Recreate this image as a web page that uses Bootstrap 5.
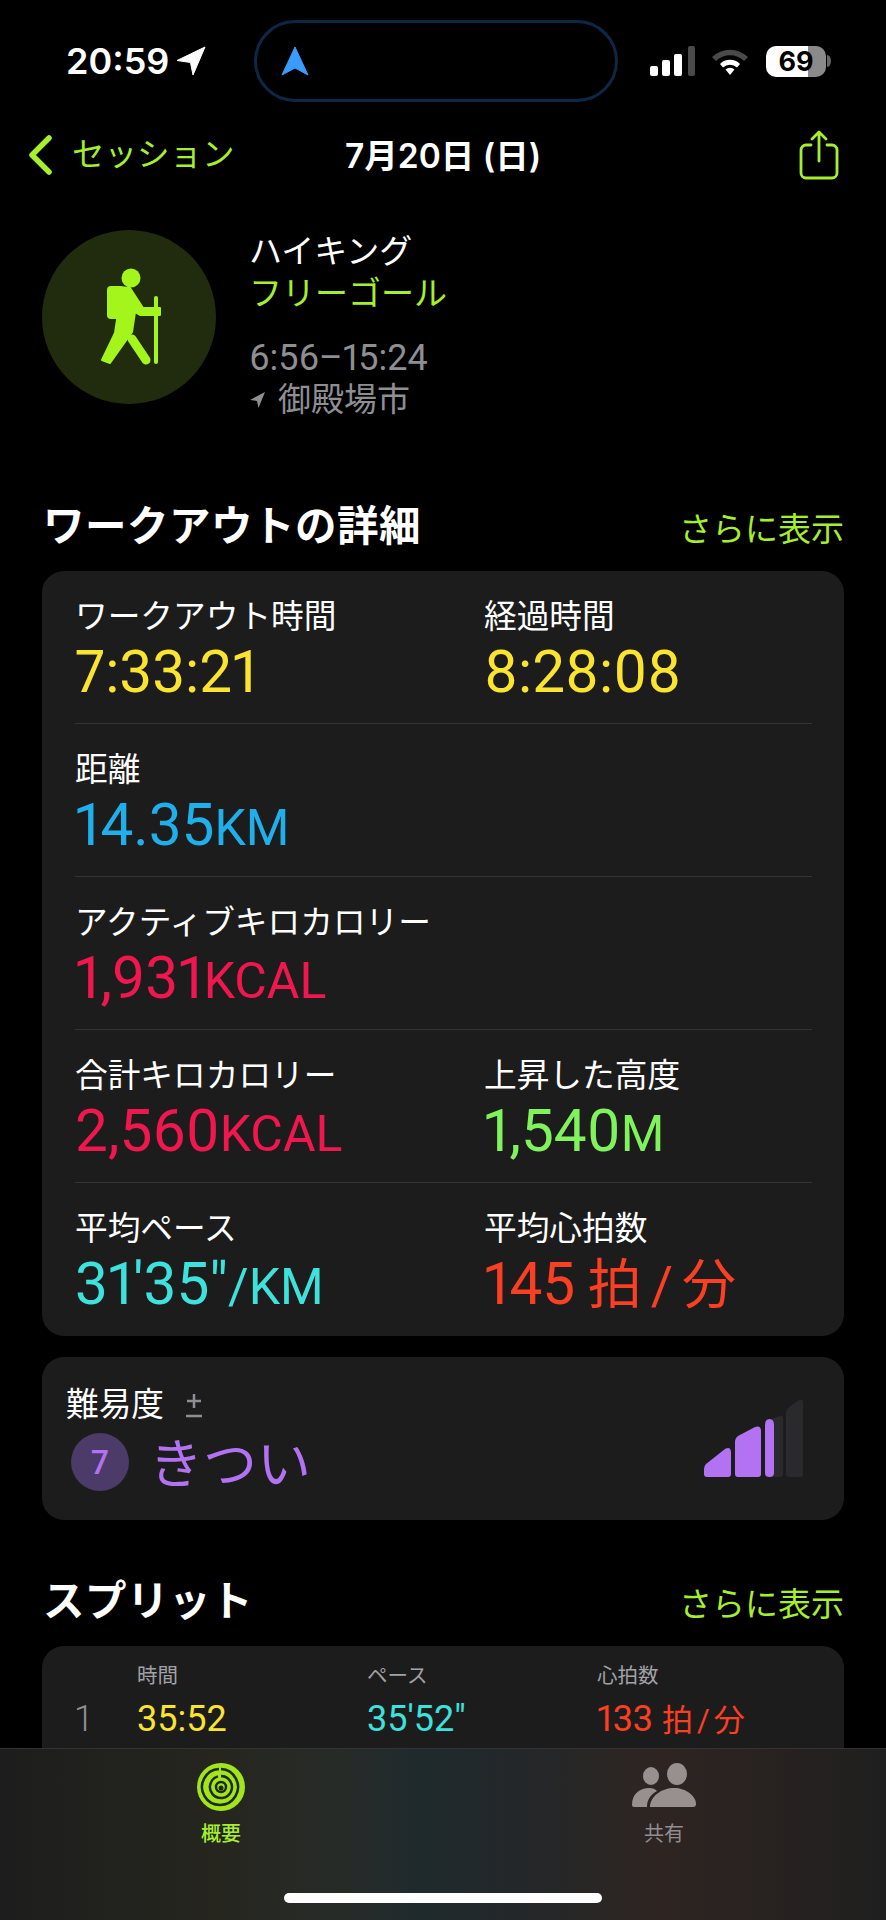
<!DOCTYPE html>
<html lang="ja"><head><meta charset="utf-8"><title>ワークアウト</title>
<link href="https://cdn.jsdelivr.net/npm/bootstrap@5.3.0/dist/css/bootstrap.min.css" rel="stylesheet">
<style>
html,body{background:#000;margin:0}
body{font-family:Roboto,"Noto Sans CJK JP",sans-serif;color:#fff;width:886px;font-variant-numeric:proportional-nums}
.screen{width:886px;height:1920px;overflow:hidden;background:#000;position:relative}
.sbar{height:122px;padding:20px 56px 20px 66px}
.sbar>*{flex:none}
.clock{font-family:Inter,sans-serif;font-weight:600;font-size:36px;line-height:44px;width:110px}
.pill{width:364px;height:82px;border:3px solid #0d2746;border-radius:41px;margin-left:48px;padding-left:24px}
.sicons{margin-left:32px;gap:14px}
.batt{width:60px;height:31px;border-radius:10px;background:linear-gradient(90deg,#fff 0,#fff 70%,#8a8a8a 70%);color:#000;font:700 27px/31px Inter,sans-serif;text-align:center}
.navline{height:66px;padding:0 47px 0 28px;position:relative}
.backtxt{font-size:32.5px;line-height:40px;color:#a6ef2e;font-weight:400;margin-left:20px}
.navtitle{font-family:Inter,"Noto Sans CJK JP",sans-serif;font-weight:600;font-size:33.5px;line-height:40px;position:absolute;left:345px;top:14px;white-space:nowrap}
.hero{margin-top:20px;padding-left:42px;height:282px}
.disc{width:174px;height:174px;border-radius:50%;background:#212c0f;margin-top:22px}
.htext{margin-left:33px;font-size:33px;line-height:42px;font-weight:400}
.lime{color:#a6ef2e}.grey{color:#8e8e93}
.sect{padding:0 42px 0 43px;height:46px}
.sect h2{font-size:41.5px;font-weight:700;line-height:46px;margin:0;color:#fff;letter-spacing:.5px}
.more{font-size:33px;line-height:46px;color:#a6ef2e;font-weight:400;padding-top:3px}
.panel{background:#1c1c1d;border-radius:22px;margin:0 42px}
.srow{margin:0 32px 0 33px;padding:26px 0 22px;border-bottom:1px solid #343436;height:153px}
.srow:last-child{border-bottom:0}
.c1{width:409px}
.lab{font-size:32.7px;line-height:40px;font-weight:400;white-space:nowrap}
.val{font-size:58.5px;line-height:60px;margin-top:5px;white-space:nowrap;font-weight:400}
.val small{font-size:50px;font-weight:400}
.val .cj{font-size:54px;font-weight:400;word-spacing:-.08em;margin-left:-2px}
.yl{color:#fbe430}.bl{color:#1fb0ec}.pk{color:#f0174f}.gr{color:#80f35c}.cy{color:#3de2dc}.rd{color:#fa3f22}.pu{color:#b272f2}
.diff{height:163px;margin-top:21px;padding:28px 40px 0 24px;position:relative}
.numc{width:58px;height:58px;border-radius:50%;background:#4c3a68;font-size:34px;line-height:58px;text-align:center;margin-left:5px;color:#b272f2;font-weight:500}
.kitsui{font-size:54px;line-height:58px;margin-left:20px;padding-top:8px;font-weight:400}
.split{height:300px;margin-top:21px;padding:16px 33px}
.sp-h,.sp-v{display:flex}
.sp-n{width:62px;flex:none}.sp-c{width:230px;flex:none;white-space:nowrap}
.sp-h{font-size:20.5px;line-height:28px;color:#a1a1a6;font-weight:400}
.sp-v{font-size:36px;line-height:40px;margin-top:9px;font-weight:400}
.sp-v .one{color:#8e8e93;font-weight:300}
.sp-v .cj{font-size:31px;word-spacing:-.12em}
.tabs{position:absolute;left:0;right:0;bottom:0;height:172px;border-top:1px solid #333335;background:linear-gradient(90deg,#1d1d1d 0,#26261f 25%,#272b28 38%,#1f2a2d 48%,#232729 58%,#2e2522 74%,#2b2321 82%,#1f1f1f 100%)}
.tabi{position:absolute;top:13px;width:120px;text-align:center;font-size:20px;line-height:26px}
.tabi svg{display:block;margin:0 auto 9px}
.homebar{position:absolute;left:284px;bottom:17px;width:318px;height:10px;border-radius:5px;background:#fff}
</style></head><body>
<div class="screen">
 <div class="sbar d-flex align-items-center">
  <div class="clock d-flex">20:59</div>
  <svg width="30" height="30" viewBox="0 0 30 30"><path d="M29 1 1 14.500 14.500 16.500 17 29z" fill="#fff" stroke="#fff" stroke-linejoin="round"/></svg>
  <div class="pill d-flex align-items-center"><svg width="28" height="30" viewBox="0 0 28 30"><path d="M14 1 27 29 14 22 1 29z" fill="#3b9cff" stroke="#3b9cff" stroke-linejoin="round"/></svg></div>
  <div class="sicons d-flex align-items-center">
   <svg width="46" height="30" viewBox="0 0 46 30"><rect x="0" y="20" width="8" height="10" rx="2" fill="#fff"/><rect x="12" y="14" width="8" height="16" rx="2" fill="#fff"/><rect x="24" y="8" width="8" height="22" rx="2" fill="#fff"/><rect x="38" y="0" width="7" height="30" rx="2" fill="#4a4a4a"/></svg>
   <svg width="40" height="30" viewBox="0 0 40 30"><path d="M2 11a26 26 0 0 1 36 0l-4 4a20 20 0 0 0-28 0z" fill="#4a4a4a"/><path d="M10 18a14 14 0 0 1 20 0l-3 3.500a10 10 0 0 0-14 0z" fill="#fff"/><path d="M15.500 23.500a6.500 6.500 0 0 1 9 0L20 29z" fill="#fff"/></svg>
   <div class="d-flex align-items-center" style="margin-left:2px"><div class="batt">69</div><svg width="4" height="12" viewBox="0 0 4 12" style="margin-left:1px"><path d="M0 0a4 6 0 0 1 0 12z" fill="#666"/></svg></div>
  </div>
 </div>
 <div class="navline d-flex align-items-center">
  <svg width="24" height="40" viewBox="0 0 24 40"><path d="M21 3 4 20l17 17" fill="none" stroke="#a6ef2e" stroke-width="5.500" stroke-linecap="round" stroke-linejoin="round"/></svg>
  <span class="backtxt">セッション</span>
  <span class="navtitle">7月20日 (日)</span>
  <svg class="ms-auto" width="40" height="50" viewBox="0 0 40 50"><path d="M12 15H7a5 5 0 0 0-5 5v23a5 5 0 0 0 5 5h26a5 5 0 0 0 5-5V20a5 5 0 0 0-5-5h-5" fill="none" stroke="#a6ef2e" stroke-width="2.800" stroke-linecap="round"/><path d="M20 31V3M13 9l7-7 7 7" fill="none" stroke="#a6ef2e" stroke-width="2.800" stroke-linecap="round" stroke-linejoin="round"/></svg>
 </div>
 <div class="hero d-flex">
  <div class="disc"><svg width="174" height="174" viewBox="0 0 174 174"><circle cx="89" cy="48" r="9.500" fill="#a3f51c"/><rect x="65" y="56" width="17" height="33" rx="4" fill="#a3f51c"/><path d="M76 57 88 58 101 78H118V85H98L93 82 90 102 68 133 60 130 73 103 75 90Z" fill="#a3f51c" stroke="#a3f51c" stroke-width="2" stroke-linejoin="round"/><path d="M90 109 104 130" stroke="#a3f51c" stroke-width="9" stroke-linecap="round"/><path d="M114 68V132" stroke="#a3f51c" stroke-width="4" stroke-linecap="round"/></svg></div>
  <div class="htext">
   <div style="margin-top:23px">ハイキング</div>
   <div class="lime">フリーゴール</div>
   <div class="grey" style="margin-top:22px;font-size:36px">6:56–15:24</div>
   <div class="grey d-flex align-items-center"><svg width="17" height="18" viewBox="0 0 17 18" style="margin-right:12px"><path d="M16 1 1 9l7 1 1.500 7z" fill="#8e8e93"/></svg>御殿場市</div>
  </div>
 </div>
 <div class="sect d-flex justify-content-between" style="margin-top:14px"><h2>ワークアウトの詳細</h2><span class="more">さらに表示</span></div>
 <div class="panel" style="margin-top:21px">
  <div class="srow d-flex"><div class="c1"><div class="lab">ワークアウト時間</div><div class="val yl">7:33:21</div></div><div><div class="lab">経過時間</div><div class="val yl">8:28:08</div></div></div>
  <div class="srow d-flex"><div class="c1"><div class="lab">距離</div><div class="val bl">14.35<small>KM</small></div></div></div>
  <div class="srow d-flex"><div class="c1"><div class="lab">アクティブキロカロリー</div><div class="val pk">1,931<small>KCAL</small></div></div></div>
  <div class="srow d-flex"><div class="c1"><div class="lab">合計キロカロリー</div><div class="val pk">2,560<small>KCAL</small></div></div><div><div class="lab">上昇した高度</div><div class="val gr">1,540<small>M</small></div></div></div>
  <div class="srow d-flex"><div class="c1"><div class="lab">平均ペース</div><div class="val cy">31'35"<small>/KM</small></div></div><div><div class="lab">平均心拍数</div><div class="val rd">145 <span class="cj">拍 / 分</span></div></div></div>
 </div>
 <div class="panel diff">
  <div class="lab d-flex align-items-center">難易度<svg width="20" height="28" viewBox="0 0 20 28" style="margin-left:20px"><path d="M10 3v14M3 10h14M2 25h16" stroke="#8e8e93" stroke-width="2.500" fill="none"/></svg></div>
  <div class="d-flex align-items-center" style="margin-top:4px"><div class="numc">7</div><div class="kitsui pu">きつい</div></div>
  <svg class="position-absolute" style="left:662px;top:42px" width="100" height="79" viewBox="0 0 100 79"><path d="M0 70 Q0 67 2 65L21 50Q27 47 27 54V75Q27 78 24 78H3Q0 78 0 75Z" fill="#b272f2"/><path d="M31 42Q31 39 34 37L51 28Q57 26 57 32V75Q57 78 54 78H34Q31 78 31 75Z" fill="#b272f2"/><path d="M61 26Q61 23 64 21L76 17Q79 16 79 20V75Q79 78 76 78H64Q61 78 61 75Z" fill="#2a2a2d"/><path d="M61 26Q61 20 65.500 20T70 26V74Q70 78 65.500 78T61 74Z" fill="#b272f2"/><path d="M82 14Q82 11 85 8L95 1Q99-1 99 4V75Q99 78 96 78H85Q82 78 82 75Z" fill="#2a2a2d"/></svg>
 </div>
 <div class="sect d-flex justify-content-between" style="margin-top:59px"><h2>スプリット</h2><span class="more">さらに表示</span></div>
 <div class="panel split">
  <div class="sp-h"><span class="sp-n"></span><span class="sp-c">時間</span><span class="sp-c">ペース</span><span class="sp-c">心拍数</span></div>
  <div class="sp-v"><span class="sp-n one">1</span><span class="sp-c yl">35:52</span><span class="sp-c cy">35'52"</span><span class="sp-c rd">133 <span class="cj">拍 / 分</span></span></div>
 </div>
 <div class="tabs">
  <div class="tabi lime" style="left:161px;font-weight:500"><svg width="50" height="50" viewBox="0 0 50 50"><circle cx="25" cy="25" r="24" fill="#a3e51c"/><g fill="none" stroke="#1d2a10" stroke-width="2.500"><path d="M25 7A18 18 0 1 1 23 7"/><path d="M25 14A11 11 0 1 1 22 14.400"/><circle cx="25" cy="25" r="5"/></g><circle cx="25" cy="26" r="2.500" fill="#1d2a10"/></svg>概要</div>
  <div class="tabi" style="left:604px;color:#8e8e93"><svg width="64" height="50" viewBox="0 0 64 50"><ellipse cx="19" cy="14" rx="8" ry="9" fill="#98908e"/><ellipse cx="45" cy="12" rx="10" ry="11" fill="#98908e"/><path d="M0 43C0 31 9 26 17 26 21 26 23 27 25 29 18 33 15 38 15 45H2Q0 45 0 43Z" fill="#98908e"/><path d="M18 45C18 34 30 26 42 26S64 34 64 42Q64 45 61 45Z" fill="#98908e"/></svg>共有</div>
  <div class="homebar"></div>
 </div>
</div>
<script src="https://cdn.jsdelivr.net/npm/bootstrap@5.3.0/dist/js/bootstrap.bundle.min.js"></script>
</body></html>
